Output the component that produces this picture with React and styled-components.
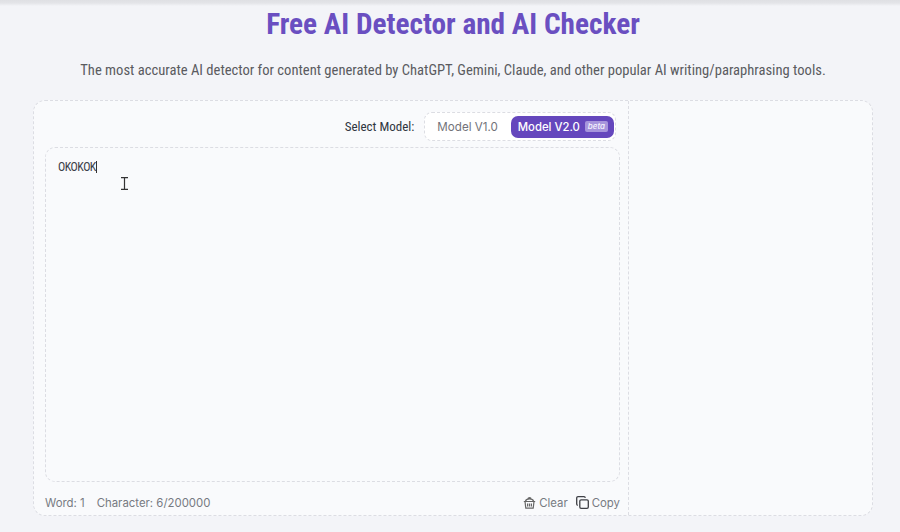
import styled, { createGlobalStyle } from 'styled-components'

const GlobalStyle = createGlobalStyle`
	html, body {
		margin: 0;
		padding: 0;
		background: #f3f4f8;
	}
	body {
		font-family: Inter, "Liberation Sans", sans-serif;
	}
`

const TrashIcon = () => (
	<svg width="13" height="13" viewBox="0 0 13 13" fill="none" stroke="#666" strokeWidth="1.2">
		<path d="M.8 5.500h11.400M2 5.500l.8 6.700h7.400l.8-6.700" />
		<path d="M4.600 7.500v3M6.500 7.500v3M8.400 7.500v3" />
		<path d="M2.500 5.200c.3-1.600 1.700-2.400 4-2.400s3.700.8 4 2.400M5 2.800c0-1.500 3-1.500 3 0" />
	</svg>
)

const CopyIcon = () => (
	<svg width="13" height="13" viewBox="0 0 13 13" fill="none" stroke="#3f4046" strokeWidth="1.3">
		<rect x="3.800" y="3.800" width="8.500" height="8.500" rx="1.300" />
		<path d="M9.300 1.800A1.300 1.300 0 0 0 8 .7H2A1.300 1.300 0 0 0 .7 2v6a1.300 1.300 0 0 0 1.100 1.300" />
	</svg>
)

const App = () => {
	return (
		<Page>
			<GlobalStyle />
			<TopShade />
			<Title>Free AI Detector and AI Checker</Title>
			<Subtitle>
				The most accurate AI detector for content generated by ChatGPT, Gemini, Claude, and other popular AI
				writing/paraphrasing tools.
			</Subtitle>
			<Card>
				<LeftPane>
					<ModelRow>
						<ModelLabel>Select Model:</ModelLabel>
						<ModelSwitch>
							<ModelButton>Model V1.0</ModelButton>
							<ModelButton $active>
								Model V2.0<Beta>beta</Beta>
							</ModelButton>
						</ModelSwitch>
					</ModelRow>
					<Editor>
						<EditorText>OKOKOK</EditorText>
						<Caret />
						<Cursor>
							<svg width="7" height="13" viewBox="0 0 7 13" fill="none" stroke="#333" strokeWidth="1.2">
								<path d="M0 .6h7M0 12.400h7M3.500.6v11.800" />
							</svg>
						</Cursor>
					</Editor>
					<Footer>
						<Counts>
							<span>Word: 1</span>
							<span>Character: 6/200000</span>
						</Counts>
						<Actions>
							<Action>
								<TrashIcon />
								Clear
							</Action>
							<Action>
								<CopyIcon />
								Copy
							</Action>
						</Actions>
					</Footer>
				</LeftPane>
				<RightPane />
			</Card>
		</Page>
	)
}

export default App

const Page = styled.div`
	position: relative;
	width: 900px;
	height: 532px;
	overflow: hidden;
	box-sizing: border-box;
	padding: 0 27px 16px 33px;
	display: flex;
	flex-direction: column;
	align-items: center;
`
const TopShade = styled.div`
	position: absolute;
	top: 0;
	left: 0;
	right: 0;
	height: 6px;
	background: linear-gradient(#dfe0e4, #e3e4e8 50%, #f3f4f8);
`
const Title = styled.h1`
	margin: 7px 0 0;
	height: 34px;
	line-height: 34px;
	font-family: Roboto, sans-serif;
	font-stretch: condensed;
	font-size: 29.25px;
	font-weight: 700;
	color: #6a4fc1;
	white-space: nowrap;
`
const Subtitle = styled.p`
	margin: 20px 0 0;
	height: 18px;
	line-height: 18px;
	font-family: Roboto, sans-serif;
	font-stretch: condensed;
	font-size: 14.6px;
	color: #5a5b5f;
	white-space: nowrap;
`
const Card = styled.div`
	margin-top: 21px;
	width: 840px;
	flex: 1;
	min-height: 0;
	box-sizing: border-box;
	display: flex;
	background: #f9fafc;
	border: 1px dashed #dcdde3;
	border-radius: 12px;
`
const LeftPane = styled.div`
	width: 595px;
	box-sizing: border-box;
	padding: 11px 8px 0 11px;
	display: flex;
	flex-direction: column;
	border-right: 1px dashed #dcdde3;
`
const RightPane = styled.div`
	flex: 1;
`
const ModelRow = styled.div`
	display: flex;
	justify-content: flex-end;
	align-items: center;
	gap: 10px;
	padding-right: 4px;
`
const ModelLabel = styled.span`
	font-family: Roboto, sans-serif;
	font-stretch: condensed;
	font-size: 13px;
	color: #2f3540;
`
const ModelSwitch = styled.div`
	display: flex;
	align-items: center;
	gap: 13px;
	height: 29px;
	box-sizing: border-box;
	padding: 0 1px 0 3px;
	background: #fff;
	border: 1px dashed #dcdde3;
	border-radius: 8px;
`
const ModelButton = styled.div`
	display: flex;
	align-items: center;
	gap: 5px;
	height: 22px;
	padding: ${(props) => (props.$active ? '0 6px 0 7px' : '0 0 0 9px')};
	border-radius: 7px;
	font-size: ${(props) => (props.$active ? '11.3px' : '11.6px')};
	font-weight: ${(props) => (props.$active ? 500 : 400)};
	color: ${(props) => (props.$active ? '#fff' : '#72737a')};
	background: ${(props) => (props.$active ? '#6547bd' : 'transparent')};
`
const Beta = styled.span`
	padding: 0 3px;
	height: 11px;
	line-height: 11px;
	font-size: 8px;
	font-style: italic;
	border-radius: 2px;
	background: #a795dc;
	color: #f5f2fd;
`
const Editor = styled.div`
	position: relative;
	margin-top: 6px;
	height: 336px;
	box-sizing: border-box;
	padding: 7px 12px;
	background: #f9fafc;
	border: 1px dashed #dcdde3;
	border-radius: 10px;
`
const EditorText = styled.span`
	font-family: Roboto, sans-serif;
	font-stretch: condensed;
	font-size: 12px;
	letter-spacing: -0.5px;
	line-height: 14px;
	color: #3c4048;
`
const Caret = styled.span`
	display: inline-block;
	width: 1px;
	height: 12px;
	vertical-align: -2px;
	background: #333;
`
const Cursor = styled.div`
	position: absolute;
	left: 75px;
	top: 29px;
	line-height: 0;
`
const Footer = styled.div`
	display: flex;
	justify-content: space-between;
	align-items: center;
	height: 33px;
	box-sizing: border-box;
	padding-top: 8px;
	font-size: 11.4px;
	color: #777a82;
`
const Counts = styled.div`
	display: flex;
	gap: 12px;
`
const Actions = styled.div`
	display: flex;
	gap: 8px;
`
const Action = styled.div`
	display: flex;
	align-items: center;
	gap: 3px;
`
